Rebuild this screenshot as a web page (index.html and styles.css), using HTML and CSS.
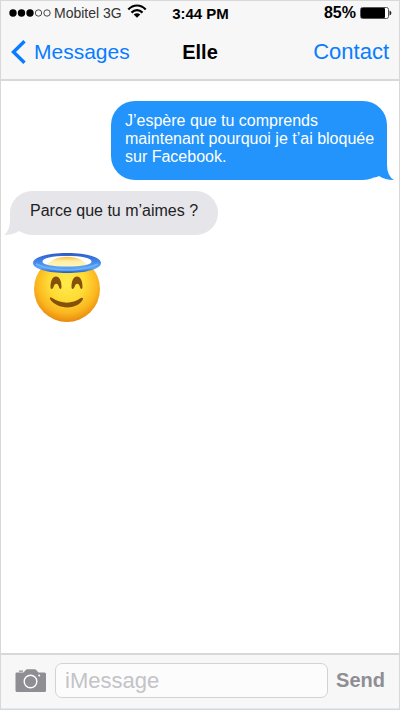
FILE: index.html
```html
<!DOCTYPE html>
<html lang="fr">
<head>
<meta charset="utf-8">
<meta name="viewport" content="width=device-width, initial-scale=1">
<title>Messages</title>
<link rel="stylesheet" href="styles.css">
</head>
<body>
<div class="phone">
  <header class="top">
    <div class="status">
      <div class="carrier">
        <svg width="43" height="10" viewBox="0 0 43 10" aria-hidden="true">
          <g fill="#000"><circle cx="4" cy="5" r="3.7"/><circle cx="12.500" cy="5" r="3.7"/><circle cx="21" cy="5" r="3.7"/></g>
          <g fill="none" stroke="#333" stroke-width=".9"><circle cx="29.500" cy="5" r="3.2"/><circle cx="38" cy="5" r="3.2"/></g>
        </svg>
        <span>Mobitel 3G</span>
        <svg class="wifi" width="20" height="14" viewBox="0 0 20 14" aria-hidden="true">
          <g fill="none" stroke="#000" stroke-width="2.200"><path d="M1.3 5.4C6.3.2 13.7.2 18.7 5.4"/><path d="M4.5 8.6C7.8 5.3 12.2 5.3 15.5 8.6"/></g>
          <path d="M6.7 10.5C8.7 8.8 11.3 8.8 13.3 10.5L10 13.8z"/>
        </svg>
      </div>
      <div class="time">3:44 PM</div>
      <div class="power">
        <span>85%</span>
        <svg width="32" height="12" viewBox="0 0 32 12" aria-hidden="true">
          <rect x=".5" y=".5" width="28" height="11" rx="2" fill="#fff" stroke="#555"/>
          <rect x="1" y="1" width="24" height="10" rx="1"/>
          <path d="M29.500 3.500C32 4.5 32 7.5 29.500 8.500z" fill="#222"/>
        </svg>
      </div>
    </div>
    <nav class="bar">
      <a class="back" href="#">
        <svg width="16" height="24" viewBox="0 0 16 24" aria-hidden="true"><path d="M13.5 1.2L2.5 12L13.5 22.8" fill="none" stroke="#087dff" stroke-width="3.4"/></svg>
        <span>Messages</span>
      </a>
      <h1 class="name">Elle</h1>
      <a class="contact" href="#">Contact</a>
    </nav>
  </header>

  <main class="thread">
    <div class="bubble sent">
      <p>J’espère que tu comprends maintenant pourquoi je t’ai bloquée sur Facebook.</p>
      <svg class="tail" width="20" height="24" viewBox="0 0 20 24" aria-hidden="true"><path d="M0 20.500Q3 20 5 19Q11 23 20 23Q13 19 13 8V0H0z" fill="#2294fb"/></svg>
    </div>
    <div class="bubble received">
      <p>Parce que tu m’aimes ?</p>
      <svg class="tail" width="20" height="24" viewBox="0 0 20 24" aria-hidden="true"><path d="M20 20.500Q17 20 15 19Q9 23 0 23Q6 19 6 8V0H20z" fill="#e5e5ea"/></svg>
    </div>
    <svg class="emoji" width="70" height="72" viewBox="0 0 70 72" role="img" aria-label="Ange souriant">
      <defs>
        <radialGradient id="face" cx=".5" cy=".4" r=".6">
          <stop offset="0" stop-color="#ffeb4d"/><stop offset=".45" stop-color="#fedc35"/><stop offset=".78" stop-color="#fbb51f"/><stop offset="1" stop-color="#e78a0e"/>
        </radialGradient>
        <linearGradient id="halo" x1="0" y1="0" x2="0" y2="1">
          <stop offset="0" stop-color="#2b58c4"/><stop offset=".35" stop-color="#3f7fe6"/><stop offset=".75" stop-color="#5ba6f6"/><stop offset="1" stop-color="#2859c4"/>
        </linearGradient>
        <linearGradient id="brow" x1="0" y1="0" x2="0" y2="1">
          <stop offset="0" stop-color="#f8bd3c"/><stop offset=".4" stop-color="#fff0a8"/><stop offset="1" stop-color="#fff6bd"/>
        </linearGradient>
      </defs>
      <circle cx="35" cy="37" r="33" fill="url(#face)"/>
      <ellipse cx="35" cy="10" rx="26" ry="6" fill="#fff"/>
      <path d="M13 16C20 1 50 1 57 16z" fill="url(#brow)"/>
      <path fill="url(#halo)" fill-rule="evenodd" d="M35 1C54 1 69 5 69 11S54 21 35 21S1 17 1 11S16 1 35 1zM35 4C20 4 10.500 6 10.500 9.500S20 14.500 35 14.500S59.500 13 59.500 9.500S50 4 35 4z"/>
      <path d="M4 12Q17 18 35 18T66 12" fill="none" stroke="#6db3fa" stroke-width="1.500"/>
      <g fill="#855009"><path d="M18.500 35C18.500 29 20.500 24.500 24 24.500S29.500 29 29.500 35C29.500 37.500 27.500 37.500 27 35C26 30.500 22.500 30.500 21.500 35C20.500 37.500 18.500 37.500 18.500 35z"/><path d="M39.500 35C39.500 29 41.500 24.500 45 24.500S50.500 29 50.500 35C50.500 37.500 48.500 37.500 48 35C47 30.500 43.500 30.500 42.500 35C41.500 37.500 39.500 37.500 39.500 35z"/>
      <path d="M18 47C17 45 19.500 45 21 46.500C29 52 41 52 48 46.500C50 45 52 45.500 50.500 48C45 58 25 58 18 47z"/></g>
    </svg>
  </main>

  <form class="composer">
    <button class="camera" type="button" aria-label="Photo">
      <svg width="32" height="24" viewBox="0 0 32 24" aria-hidden="true">
        <path d="M.5 4.800Q.5 3.500 2 3.500H8.500L11 .8Q11.500.3 12.500.3H19.500Q20.500.3 21 .8L23.500 3.500H29.500Q31 3.500 31 5V21.500Q31 23 29.500 23H2Q.5 23 .5 21.500zM4 1.500H8V2.700H4z" fill="#8e8e93"/>
        <circle cx="15.500" cy="12.500" r="6.300" fill="none" stroke="#fff" stroke-width="1.400"/>
        <circle cx="24.200" cy="6.500" r="1" fill="#fff"/>
      </svg>
    </button>
    <input class="field" type="text" placeholder="iMessage" aria-label="iMessage">
    <button class="send" type="button">Send</button>
  </form>
</div>
</body>
</html>
```
FILE: styles.css
```css
* {
  box-sizing: border-box;
}

body {
  margin: 0;
  font-family: "Liberation Sans", Arial, sans-serif;
  font-size: 16px;
  color: #000;
  background: #fff;
}

.phone {
  display: flex;
  flex-direction: column;
  min-height: 100vh;
  border: 1px solid #d8d8d8;
}

.top {
  background: #f7f7f7;
  border-bottom: 2px solid #d8d8d8;
}

.status {
  display: grid;
  grid-template-columns: 1fr auto 1fr;
  align-items: center;
  height: 24px;
  padding: 0 7px 0 8px;
}

.carrier {
  display: flex;
  align-items: center;
  gap: 2px;
  font-size: 14px;
  color: #333;
  white-space: nowrap;
}

.wifi {
  margin: 0 0 4px 3px;
}

.time {
  font-size: 15px;
  font-weight: bold;
}

.power {
  display: flex;
  align-items: center;
  justify-content: flex-end;
  gap: 4px;
  font-weight: bold;
}

.bar {
  display: grid;
  grid-template-columns: 1fr auto 1fr;
  align-items: center;
  height: 54px;
  padding: 0 10px;
}

.back,
.contact {
  color: #087dff;
  text-decoration: none;
}

.back {
  display: flex;
  align-items: center;
  gap: 7px;
  font-size: 21px;
}

.name {
  margin: 0;
  font-size: 20px;
}

.contact {
  justify-self: end;
  font-size: 22px;
}

.thread {
  flex: 1;
  display: flex;
  flex-direction: column;
  align-items: flex-start;
  padding: 20px 12px 20px 9px;
}

.bubble {
  position: relative;
  line-height: 18px;
}

.bubble p {
  margin: 0;
}

.sent {
  align-self: flex-end;
  max-width: 276px;
  padding: 11px 12px 14px 14px;
  border-radius: 24px;
  color: #fff;
  background: #2294fb;
}

.received {
  margin-top: 11px;
  padding: 11px 20px 15px;
  border-radius: 22px;
  color: #222;
  background: #e5e5ea;
}

.tail {
  position: absolute;
  bottom: -1px;
}

.sent .tail {
  right: -7px;
}

.received .tail {
  left: -6px;
}

.emoji {
  margin: 17px 0 0 22px;
}

.composer {
  display: flex;
  align-items: center;
  gap: 8px;
  height: 56px;
  padding: 0 14px 2px;
  border-top: 2px solid #d8d8d8;
  border-bottom: 1px solid #d9eaf8;
  background: #f7f7f8;
}

.camera,
.send {
  padding: 0;
  border: 0;
  background: none;
  font-family: inherit;
}

.camera svg {
  display: block;
}

.field {
  flex: 1;
  min-width: 0;
  height: 35px;
  padding: 0 9px;
  border: 1px solid #d3d3d6;
  border-radius: 7px;
  background: #fcfcfc;
  font-family: inherit;
  font-size: 22px;
}

.field::placeholder {
  color: #c3c3c8;
}

.send {
  font-size: 20px;
  font-weight: bold;
  color: #8e8e93;
}
```
